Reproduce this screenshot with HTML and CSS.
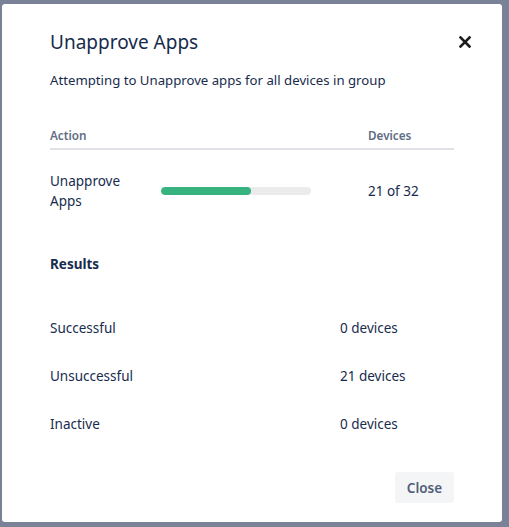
FILE: index.html
```html
<!DOCTYPE html>
<html lang="en">
<head>
<meta charset="utf-8">
<title>Unapprove Apps</title>
<link rel="stylesheet" href="styles.css">
</head>
<body>
<div class="modal">
  <div class="modal-header">
    <h1 class="title">Unapprove Apps</h1>
    <button class="close-x" aria-label="Close">
      <svg width="12" height="12" viewBox="0 0 12 12"><path d="M1.5 1.5 L10.5 10.5 M10.5 1.5 L1.5 10.5" stroke="#1d1d1f" stroke-width="2.6" stroke-linecap="square"/></svg>
    </button>
  </div>
  <p class="subtitle">Attempting to Unapprove apps for all devices in group</p>

  <div class="table">
    <div class="th th-action">Action</div>
    <div class="th th-devices">Devices</div>
    <div class="td td-action">Unapprove<br>Apps</div>
    <div class="td td-bar"><div class="bar"><div class="bar-fill" style="width:60%"></div></div></div>
    <div class="td td-devices">21 of 32</div>
  </div>

  <h2 class="results-title">Results</h2>
  <div class="results">
    <div class="r-label">Successful</div><div class="r-value">0 devices</div>
    <div class="r-label">Unsuccessful</div><div class="r-value">21 devices</div>
    <div class="r-label">Inactive</div><div class="r-value">0 devices</div>
  </div>

  <div class="footer">
    <button class="btn">Close</button>
  </div>
</div>
</body>
</html>
```
FILE: styles.css
```css
* { box-sizing: border-box; }
html, body { margin: 0; padding: 0; }
body {
  background: #7a8297;
  font-family: "Noto Sans", "Open Sans", sans-serif;
  color: #172b4d;
  width: 509px;
  height: 527px;
  overflow: hidden;
}
.modal {
  margin: 4px 0 0 2px;
  width: 500px;
  height: 518px;
  background: #fff;
  border-radius: 3px;
  padding: 23px 48px 0 48px;
}
.modal-header {
  display: flex;
  justify-content: space-between;
  align-items: center;
  height: 30px;
}
.title {
  margin: 0;
  font-size: 19px;
  font-weight: 400;
  line-height: 30px;
  color: #172b4d;
}
.close-x {
  border: 0;
  background: none;
  padding: 0;
  width: 12px;
  height: 12px;
  margin-right: -17px;
  display: flex;
}
.subtitle {
  margin: 13px 0 0 0;
  font-size: 13.2px;
  line-height: 20px;
}
.table {
  margin-top: 37px;
  display: grid;
  grid-template-columns: 111px 150px 1fr;
}
.th {
  font-size: 11.7px;
  font-weight: 600;
  color: #5e6c84;
  line-height: 16px;
  padding-bottom: 5px;
  border-bottom: 2px solid #dfe1e6;
}
.th-action { grid-column: 1 / 3; }
.th-devices { padding-left: 57px; }
.td {
  display: flex;
  align-items: center;
  font-size: 13.5px;
  line-height: 20px;
  padding: 21px 0;
}
.td-devices { padding-left: 57px; }
.bar {
  width: 150px;
  height: 8px;
  border-radius: 4px;
  background: #ebebeb;
  overflow: hidden;
}
.bar-fill {
  height: 100%;
  background: #36b37e;
  border-radius: 4px;
}
.results-title {
  margin: 22px 0 0 0;
  font-size: 13.5px;
  font-weight: 700;
  line-height: 20px;
}
.results {
  margin-top: 40px;
  display: grid;
  grid-template-columns: 290px 1fr;
  grid-auto-rows: 48px;
  font-size: 13.5px;
  line-height: 20px;
}
.r-label, .r-value { padding-top: 4px; }
.footer {
  display: flex;
  justify-content: flex-end;
  margin-top: 14px;
}
.btn {
  width: 59px;
  height: 31px;
  border: 0;
  border-radius: 3px;
  background: #f4f5f7;
  color: #505f79;
  font-family: inherit;
  font-size: 13.5px;
  font-weight: 600;
  padding: 0;
}
```
